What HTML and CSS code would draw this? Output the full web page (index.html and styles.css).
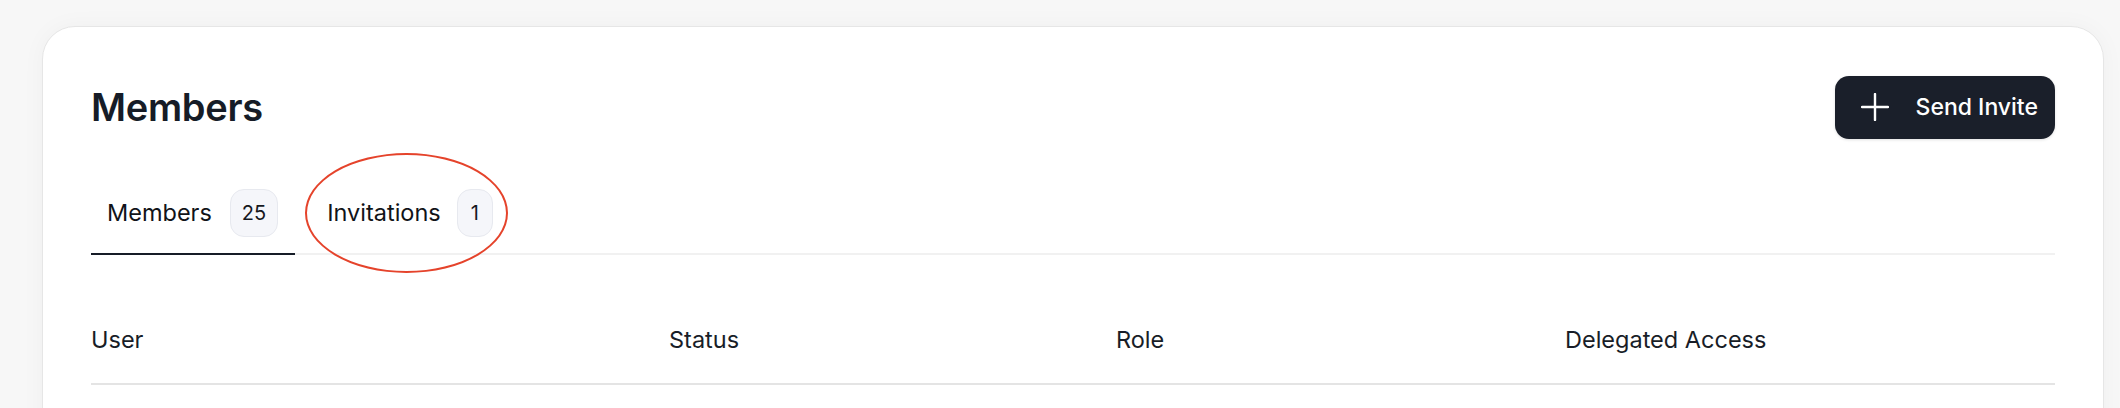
FILE: index.html
```html
<!DOCTYPE html>
<html lang="en">
<head>
<meta charset="utf-8">
<title>Members</title>
<link rel="stylesheet" href="styles.css">
</head>
<body>
<main class="card">
  <header class="card-header">
    <h1 class="title">Members</h1>
    <button class="btn-primary" type="button">
      <svg class="btn-icon" viewBox="0 0 28 28" width="28" height="28" aria-hidden="true">
        <path d="M14 1v26M1 14h26" fill="none" stroke="currentColor" stroke-width="2.4" stroke-linecap="round"/>
      </svg>
      <span>Send Invite</span>
    </button>
  </header>

  <nav class="tabs">
    <a class="tab tab-active" href="#">
      <span class="tab-label">Members</span>
      <span class="tab-count">25</span>
    </a>
    <a class="tab tab-highlight" href="#">
      <span class="tab-label">Invitations</span>
      <span class="tab-count">1</span>
      <span class="annotation" aria-hidden="true"></span>
    </a>
  </nav>

  <div class="table">
    <div class="table-head">
      <div class="th">User</div>
      <div class="th">Status</div>
      <div class="th">Role</div>
      <div class="th">Delegated Access</div>
    </div>
  </div>
</main>
</body>
</html>
```

FILE: styles.css
```css
* {
  box-sizing: border-box;
}

html, body {
  margin: 0;
  padding: 0;
}

body {
  background: #f7f7f7;
  font-family: "Inter", "Noto Sans", "Liberation Sans", sans-serif;
  color: #181d27;
  padding: 26px 16px 0 42px;
  height: 408px;
  overflow: hidden;
}

.card {
  background: #ffffff;
  border: 1px solid #e6e6e6;
  border-radius: 33px;
  padding: 48px 48px 40px 48px;
  box-shadow: 0 0 24px rgba(0, 0, 0, 0.035);
  min-height: 600px;
}

.card-header {
  display: flex;
  align-items: center;
  justify-content: space-between;
  height: 64px;
}

.title {
  margin: 0;
  font-size: 38px;
  font-weight: 600;
  line-height: 48px;
  color: #161c27;
  letter-spacing: -0.3px;
}

.btn-primary {
  display: flex;
  align-items: center;
  gap: 27px;
  height: 63px;
  padding: 0 17px 0 26px;
  border: none;
  border-radius: 14px;
  background: #1a1f2a;
  color: #ffffff;
  font-family: inherit;
  font-size: 23px;
  font-weight: 500;
  box-shadow: 0 1px 3px rgba(0, 0, 0, 0.12);
}

.btn-icon {
  display: block;
}

.tabs {
  display: flex;
  gap: 16px;
  margin-top: 34px;
  border-bottom: 2px solid #f1f1f1;
}

.tab {
  position: relative;
  display: flex;
  align-items: center;
  gap: 18px;
  padding: 16px 17px 16px 16px;
  color: #111318;
  text-decoration: none;
  font-size: 23.5px;
  line-height: 32px;
  margin-bottom: -2px;
  border-bottom: 2px solid transparent;
}

.tab-active {
  border-bottom-color: #161c27;
}

.tab-highlight {
  gap: 16px;
}

.tab-count {
  display: flex;
  align-items: center;
  justify-content: center;
  min-width: 36px;
  height: 48px;
  padding: 0 11px;
  border: 1px solid #e7e9ef;
  border-radius: 14px;
  background: #f5f6fa;
  font-size: 20px;
  color: #15181e;
}

.annotation {
  position: absolute;
  left: -6px;
  top: -20px;
  width: 203px;
  height: 120px;
  border: 2.5px solid #e5432b;
  border-radius: 50%;
  pointer-events: none;
}

.table {
  margin-top: 43px;
}

.table-head {
  display: grid;
  grid-template-columns: 578px 447px 449px 1fr;
  border-bottom: 2px solid #e4e4e4;
}

.th {
  padding: 24px 0 25px 0;
  font-size: 23.5px;
  line-height: 36px;
  color: #181d27;
  font-weight: 400;
}
```
